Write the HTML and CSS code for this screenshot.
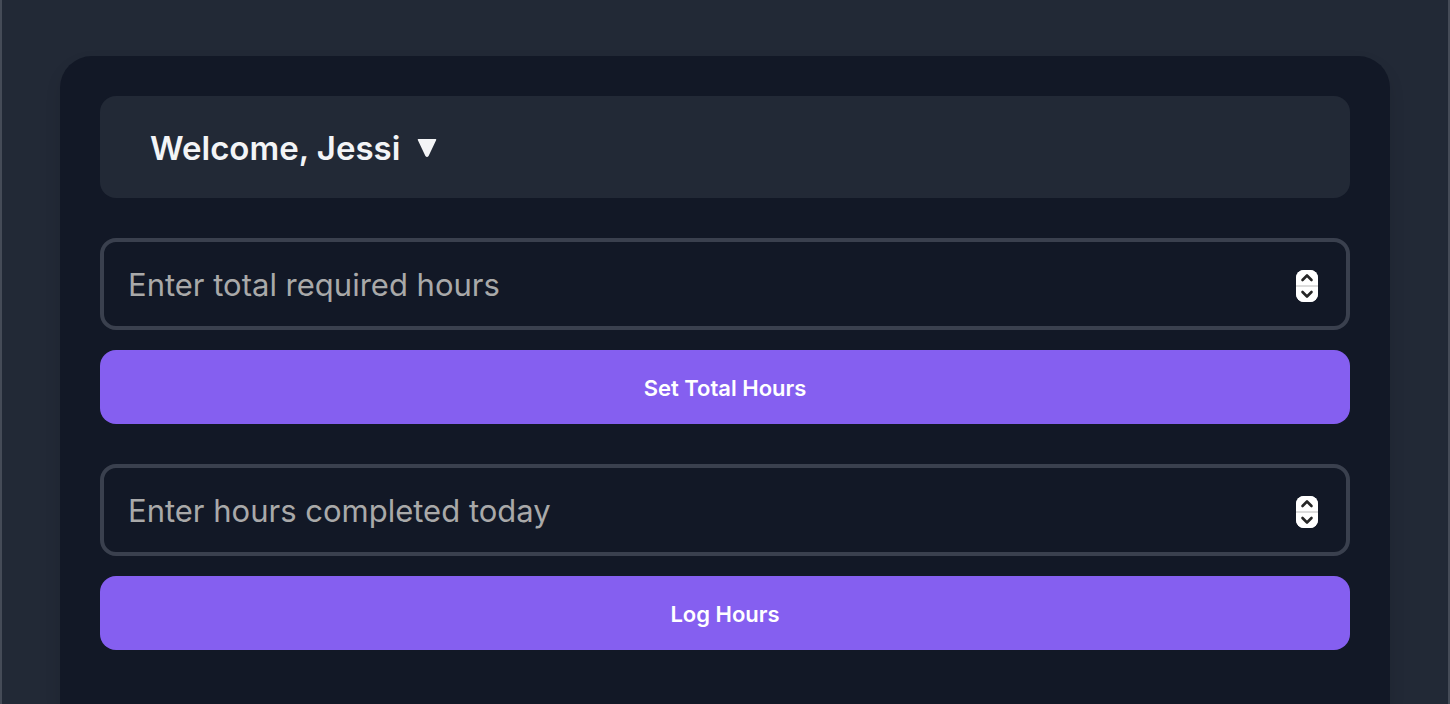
FILE: index.html
```html
<!DOCTYPE html>
<html lang="en">
<head>
<meta charset="utf-8">
<meta name="viewport" content="width=device-width, initial-scale=1">
<title>Hours Tracker</title>
<link rel="stylesheet" href="styles.css">
</head>
<body>
<main class="card">
  <header class="welcome">
    <button class="welcome-toggle" type="button" aria-haspopup="menu">
      <span>Welcome, Jessi</span>
      <svg class="caret" viewBox="0 0 20 20" aria-hidden="true"><path d="M1.400 1h17.200q1 0 .6 1L11.600 18q-1.600 2-3.200 0L.8 2q-.4-1 .6-1z"/></svg>
    </button>
  </header>
  <form class="entry">
    <div class="field">
      <input class="field-input" type="number" placeholder="Enter total required hours" aria-label="Total required hours">
      <div class="stepper">
        <button class="step" type="button" aria-label="Increase total hours"><svg class="chevron" viewBox="0 0 14 9"><path d="M2.500 7L7 2.500 11.500 7"/></svg></button>
        <button class="step step-down" type="button" aria-label="Decrease total hours"><svg class="chevron" viewBox="0 0 14 9"><path d="M2.500 2L7 6.500 11.500 2"/></svg></button>
      </div>
    </div>
    <button class="submit" type="button">Set Total Hours</button>
  </form>
  <form class="entry">
    <div class="field">
      <input class="field-input" type="number" placeholder="Enter hours completed today" aria-label="Hours completed today">
      <div class="stepper">
        <button class="step" type="button" aria-label="Increase completed hours"><svg class="chevron" viewBox="0 0 14 9"><path d="M2.500 7L7 2.500 11.500 7"/></svg></button>
        <button class="step step-down" type="button" aria-label="Decrease completed hours"><svg class="chevron" viewBox="0 0 14 9"><path d="M2.500 2L7 6.500 11.500 2"/></svg></button>
      </div>
    </div>
    <button class="submit" type="button">Log Hours</button>
  </form>
</main>
</body>
</html>
```

FILE: styles.css
```css
* {
  box-sizing: border-box;
}

body {
  display: flex;
  min-height: 100vh;
  margin: 0;
  padding: 56px 58px 0;
  border: 0 solid #454b57;
  border-width: 0 2px;
  background: #222936;
  font-family: Inter, "Liberation Sans", sans-serif;
}

button {
  border: 0;
  font-family: inherit;
  cursor: pointer;
}

.card {
  display: flex;
  flex: 1;
  flex-direction: column;
  gap: 40px;
  min-width: 0;
  padding: 40px;
  border-radius: 32px 32px 0 0;
  background: #121826;
  box-shadow: 0 8px 16px rgba(0, 0, 0, 0.1);
}

.welcome {
  padding: 31px 50px 29px;
  border-radius: 16px;
  background: #222936;
}

.welcome-toggle {
  display: flex;
  align-items: center;
  gap: 17px;
  padding: 0;
  background: none;
  color: #f3f4f6;
  font-size: 33px;
  font-weight: 600;
  line-height: 42px;
}

.caret {
  width: 20px;
  height: 20px;
  fill: currentColor;
}

.entry {
  display: flex;
  flex-direction: column;
  gap: 20px;
}

.field {
  display: flex;
  align-items: center;
  height: 92px;
  padding: 4px 28px 0 24px;
  border: 4px solid #3a404e;
  border-radius: 16px;
}

.field-input {
  flex: 1;
  min-width: 0;
  padding: 0 0 2px;
  border: 0;
  outline: 0;
  background: none;
  color: #f3f4f6;
  font-family: inherit;
  font-size: 31px;
  line-height: 40px;
  appearance: textfield;
}

.field-input::placeholder {
  color: #a9a9a9;
}

.stepper {
  display: flex;
  flex-direction: column;
  width: 22px;
  height: 32px;
  overflow: hidden;
  border-radius: 8px;
  background: #fff;
}

.step {
  display: flex;
  flex: 1;
  align-items: center;
  justify-content: center;
  padding: 0;
  background: #fff;
}

.step-down {
  border-top: 2px solid #dcdcdc;
}

.chevron {
  width: 14px;
  height: 9px;
  fill: none;
  stroke: #262626;
  stroke-width: 2.6;
  stroke-linecap: round;
  stroke-linejoin: round;
}

.submit {
  padding: 23px 22px 21px;
  border-radius: 16px;
  background: #855ff0;
  color: #fff;
  font-size: 22px;
  font-weight: 600;
  line-height: 30px;
}
```
